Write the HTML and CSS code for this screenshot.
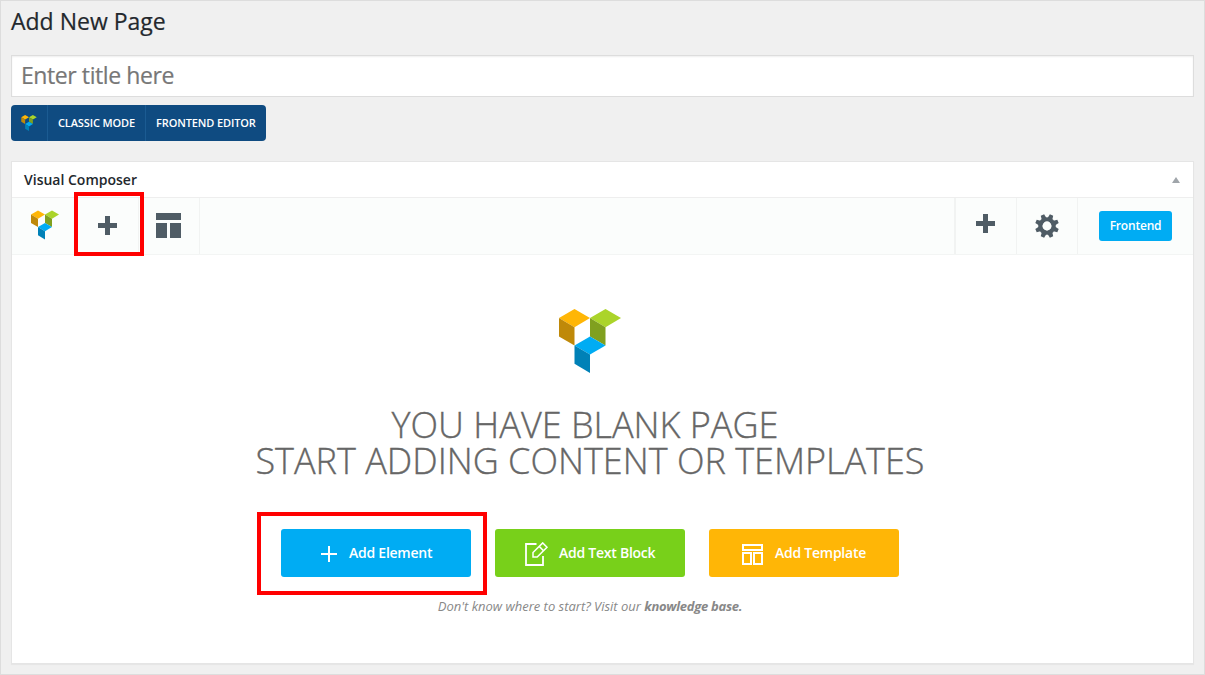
FILE: index.html
```html
<!DOCTYPE html>
<html lang="en">
<head>
<meta charset="utf-8">
<title>Add New Page</title>
<link rel="stylesheet" href="styles.css">
</head>
<body>
<svg class="defs" width="0" height="0">
  <symbol id="logo" viewBox="0 0 62 64">
    <path fill="#ffb606" d="M0 9 15.5 0 31 9 15.5 18.2z"/>
    <path fill="#bf8909" d="M0 9 15.5 18.2V36.4L0 27.4z"/>
    <path fill="#abd42a" d="M31 9 46.5 0 62 9 46.5 18.2z"/>
    <path fill="#80a01f" d="M31 9 46.5 18.2V36.4L31 27.4z"/>
    <path fill="#00acf3" d="M15.5 36.4 31 27.4 46.5 36.4 31 45.6z"/>
    <path fill="#0081b7" d="M15.5 36.4 31 45.6V64L15.5 54.8z"/>
  </symbol>
</svg>
<main class="page">
  <h1 class="title"><span>Add New Page</span></h1>
  <div class="title-input"><span>Enter title here</span></div>
  <div class="switch">
    <span class="switch-logo"><svg width="16" height="16"><use href="#logo"/></svg></span>
    <span class="switch-item classic"><b>CLASSIC MODE</b></span>
    <span class="switch-item front"><b>FRONTEND EDITOR</b></span>
  </div>
  <section class="panel">
    <header class="panel-head">
      <h2><span>Visual Composer</span></h2>
      <svg class="toggle" width="8" height="6"><path fill="#a0a5aa" d="M4 0 8 6H0z"/></svg>
    </header>
    <nav class="bar">
      <div class="cell brand"><svg width="28" height="30"><use href="#logo"/></svg></div>
      <div class="cell add">
        <svg width="19" height="19"><path fill="#4f5c65" d="M7 0h5v7h7v5h-7v7H7v-7H0V7h7z"/></svg>
        <i class="mark mark-add"></i>
      </div>
      <div class="cell layout"><svg width="25" height="25"><path fill="#4f5c65" d="M0 0h25v7H0zM0 10h11v15H0zM14 10h11v15H14z"/></svg></div>
      <div class="cell plus"><svg width="19" height="19"><path fill="#4f5c65" d="M7 0h5v7h7v5h-7v7H7v-7H0V7h7z"/></svg></div>
      <div class="cell gear">
        <svg width="24" height="24" viewBox="-12 -12 24 24">
          <g fill="#4f5c65" transform="rotate(22.5)">
            <path id="tooth" d="M-2.6-7 -1.8-11.9H1.8L2.6-7z"/>
            <use href="#tooth" transform="rotate(45)"/><use href="#tooth" transform="rotate(90)"/>
            <use href="#tooth" transform="rotate(135)"/><use href="#tooth" transform="rotate(180)"/>
            <use href="#tooth" transform="rotate(225)"/><use href="#tooth" transform="rotate(270)"/>
            <use href="#tooth" transform="rotate(315)"/>
          </g>
          <circle r="6.6" fill="none" stroke="#4f5c65" stroke-width="4.4"/>
          <circle r="4.4" fill="#fbfdfc"/>
        </svg>
      </div>
      <div class="cell publish"><span class="frontend"><b>Frontend</b></span></div>
    </nav>
    <div class="blank">
      <svg class="hero" width="62" height="64"><use href="#logo"/></svg>
      <div class="headline"><p><span>YOU HAVE BLANK PAGE</span></p><p><span>START ADDING CONTENT OR TEMPLATES</span></p></div>
      <div class="actions">
        <div class="btn blue">
          <svg width="16" height="16"><path fill="#fff" d="M7 0h2v7h7v2H9v7H7V9H0V7h7z"/></svg>
          <b>Add Element</b>
          <i class="mark mark-element"></i>
        </div>
        <div class="btn green">
          <svg width="24" height="24" fill="none" stroke="#fff" stroke-width="1.8"><path d="M11.5 2H1v21h17V14"/><path d="M8 15v-4.500L17.700.9 22 5.200 12.200 15zM14.200 4.400l4.300 4.300" stroke-width="1.5"/></svg>
          <b>Add Text Block</b>
        </div>
        <div class="btn orange">
          <svg width="21" height="21" fill="none" stroke="#fff" stroke-width="2"><path d="M1 1h19v5H1zM1 9h8v11H1zM12 9h8v11h-8z"/></svg>
          <b>Add Template</b>
        </div>
      </div>
      <p class="help"><span>Don't know where to start? Visit our <strong>knowledge base.</strong></span></p>
    </div>
  </section>
</main>
</body>
</html>
```
FILE: styles.css
```css
* { box-sizing: border-box; margin: 0; padding: 0; }
body { background: #f0f0f0; font-family: "Open Sans", sans-serif; color: #23282d; }
svg { display: block; flex: none; }
.defs { position: absolute; }
b { font-weight: 600; }
span, b { white-space: nowrap; }
.page { width: 1205px; height: 675px; border: 1px solid #ddd; padding: 0 10px; overflow: hidden; }
.title { height: 54px; padding-top: 4px; font-size: 23px; line-height: 32px; font-weight: 400; -webkit-text-stroke: .2px; }
.title-input { height: 42px; border: 1px solid #ddd; background: #fff; padding-left: 9px; font-size: 23px; line-height: 39px; letter-spacing: -.42px; color: #777; box-shadow: inset 0 1px 2px rgba(0,0,0,.07); -webkit-text-stroke: .2px; }
.switch { display: flex; width: 255px; height: 36px; margin-top: 8px; border-radius: 4px; background: #0f4b81; color: #fff; font-size: 11px; line-height: 36px; letter-spacing: -.12px; overflow: hidden; }
.switch-logo { width: 36px; padding: 10px 0 0 10px; }
.switch-item { border-left: 1px solid #1b5b92; padding-left: 10px; }
.classic { width: 98px; }
.front { width: 121px; }
.panel { height: 503px; margin-top: 20px; background: #fff; border: 1px solid #e5e5e5; box-shadow: 0 1px 1px rgba(0,0,0,.04); }
.panel-head { display: flex; justify-content: space-between; height: 36px; border-bottom: 1px solid #eee; padding: 0 13.500px 0 12px; }
.panel-head h2 { font-size: 14px; line-height: 36px; font-weight: 600; }
.toggle { margin-top: 15px; }
.bar { display: flex; height: 57px; background: #fbfdfc; border-bottom: 1px solid #f3f5f4; }
.cell { border-right: 1px solid #f1f3f2; }
.brand { width: 63px; padding: 12px 0 0 19px; border: 0; }
.add { position: relative; width: 64px; padding: 18px 0 0 23px; }
.layout { width: 61px; padding: 15px 0 0 17px; }
.plus { width: 63px; margin-left: auto; padding: 16px 0 0 20px; border-left: 2px solid #f1f3f2; }
.gear { width: 61px; padding: 15.500px 0 0 17.500px; }
.publish { width: 115px; padding: 13px 0 0 21px; border: 0; }
.frontend { display: block; width: 73px; height: 30px; border-radius: 3px; background: #00acf3; color: #fff; font-size: 12px; line-height: 30px; letter-spacing: -.2px; text-align: center; }
.mark { position: absolute; border: 4px solid #f00; }
.mark-add { left: -1px; top: -6px; width: 70px; height: 64px; }
.mark-element { left: -24px; top: -17px; width: 230px; height: 83px; }
.blank { padding-top: 54px; }
.hero { margin-left: 547px; }
.headline { width: 1156px; margin-top: 34px; text-align: center; font-size: 36px; line-height: 36px; font-weight: 300; color: #666; -webkit-text-stroke: .35px; }
.headline p:first-child { padding-right: 10px; }
.actions { display: flex; gap: 24px; margin: 50px 0 0 269px; }
.btn { position: relative; display: flex; width: 190px; height: 48px; border-radius: 3px; color: #fff; font-size: 14px; line-height: 48px; letter-spacing: -.25px; }
.blue { background: #00acf3; }
.blue svg { margin: 17px 12px 0 40px; }
.green { background: #78d01a; }
.green svg { margin: 13px 10px 0 30px; }
.orange { background: #ffb606; }
.orange svg { margin: 15px 12px 0 33px; }
.help { width: 1156px; margin-top: 19px; text-align: center; font-size: 13px; line-height: 20px; letter-spacing: -.01px; font-style: italic; color: #888; }
.help strong { letter-spacing: -.28px; }
```
